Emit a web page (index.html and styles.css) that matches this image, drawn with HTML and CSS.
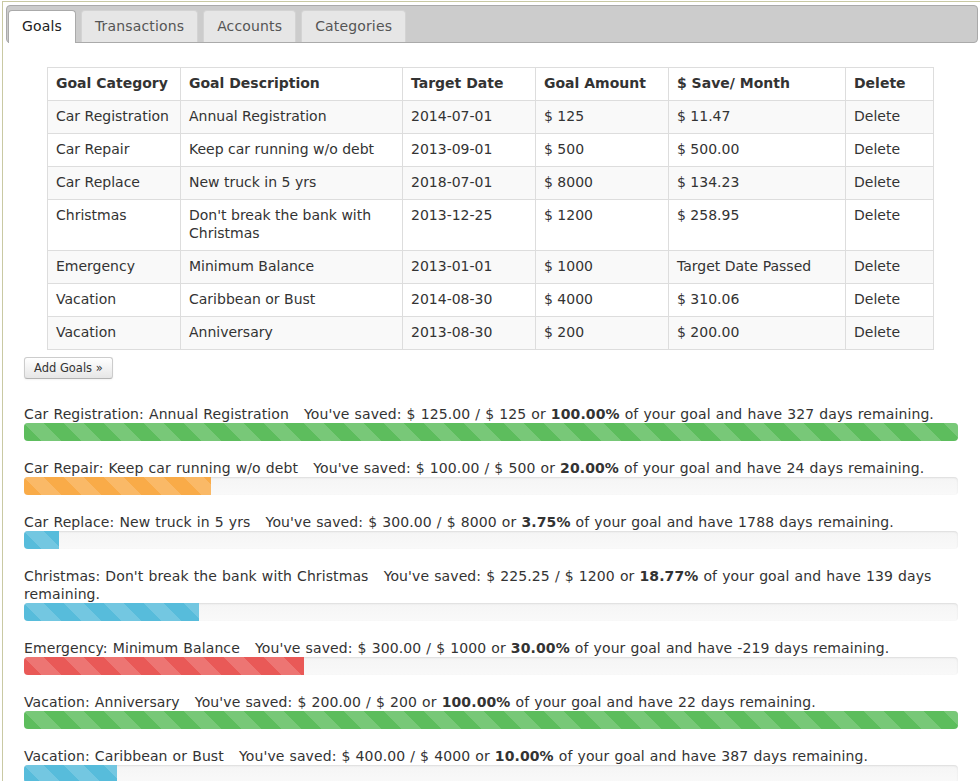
FILE: index.html
```html
<!DOCTYPE html>
<html>
<head>
<meta charset="utf-8">
<title>Goals</title>
<link rel="stylesheet" href="styles.css">
</head>
<body>
<div class="frame">
  <ul class="nav">
    <li class="tab active">Goals</li>
    <li class="tab">Transactions</li>
    <li class="tab">Accounts</li>
    <li class="tab">Categories</li>
  </ul>
  <div class="panel">
    <table class="goals">
      <colgroup>
        <col class="c1"><col class="c2"><col class="c3"><col class="c4"><col class="c5"><col class="c6">
      </colgroup>
      <thead>
        <tr><th>Goal Category</th><th>Goal Description</th><th>Target Date</th><th>Goal Amount</th><th>$ Save/ Month</th><th>Delete</th></tr>
      </thead>
      <tbody>
        <tr><td>Car Registration</td><td>Annual Registration</td><td>2014-07-01</td><td>$ 125</td><td>$ 11.47</td><td>Delete</td></tr>
        <tr><td>Car Repair</td><td>Keep car running w/o debt</td><td>2013-09-01</td><td>$ 500</td><td>$ 500.00</td><td>Delete</td></tr>
        <tr><td>Car Replace</td><td>New truck in 5 yrs</td><td>2018-07-01</td><td>$ 8000</td><td>$ 134.23</td><td>Delete</td></tr>
        <tr><td>Christmas</td><td>Don't break the bank with Christmas</td><td>2013-12-25</td><td>$ 1200</td><td>$ 258.95</td><td>Delete</td></tr>
        <tr><td>Emergency</td><td>Minimum Balance</td><td>2013-01-01</td><td>$ 1000</td><td>Target Date Passed</td><td>Delete</td></tr>
        <tr><td>Vacation</td><td>Caribbean or Bust</td><td>2014-08-30</td><td>$ 4000</td><td>$ 310.06</td><td>Delete</td></tr>
        <tr><td>Vacation</td><td>Anniversary</td><td>2013-08-30</td><td>$ 200</td><td>$ 200.00</td><td>Delete</td></tr>
      </tbody>
    </table>
    <button class="btn">Add Goals &raquo;</button>

    <div class="goal">
      <p class="label">Car Registration: Annual Registration &nbsp;&nbsp;You've saved: $ 125.00 / $ 125 or <b>100.00%</b> of your goal and have 327 days remaining.</p>
      <div class="progress"><div class="bar success" style="width:100%"></div></div>
    </div>
    <div class="goal">
      <p class="label">Car Repair: Keep car running w/o debt &nbsp;&nbsp;You've saved: $ 100.00 / $ 500 or <b>20.00%</b> of your goal and have 24 days remaining.</p>
      <div class="progress"><div class="bar warning" style="width:20%"></div></div>
    </div>
    <div class="goal">
      <p class="label">Car Replace: New truck in 5 yrs &nbsp;&nbsp;You've saved: $ 300.00 / $ 8000 or <b>3.75%</b> of your goal and have 1788 days remaining.</p>
      <div class="progress"><div class="bar info" style="width:3.75%"></div></div>
    </div>
    <div class="goal">
      <p class="label">Christmas: Don't break the bank with Christmas &nbsp;&nbsp;You've saved: $ 225.25 / $ 1200 or <b>18.77%</b> of your goal and have 139 days remaining.</p>
      <div class="progress"><div class="bar info" style="width:18.77%"></div></div>
    </div>
    <div class="goal">
      <p class="label">Emergency: Minimum Balance &nbsp;&nbsp;You've saved: $ 300.00 / $ 1000 or <b>30.00%</b> of your goal and have -219 days remaining.</p>
      <div class="progress"><div class="bar danger" style="width:30%"></div></div>
    </div>
    <div class="goal">
      <p class="label">Vacation: Anniversary &nbsp;&nbsp;You've saved: $ 200.00 / $ 200 or <b>100.00%</b> of your goal and have 22 days remaining.</p>
      <div class="progress"><div class="bar success" style="width:100%"></div></div>
    </div>
    <div class="goal">
      <p class="label">Vacation: Caribbean or Bust &nbsp;&nbsp;You've saved: $ 400.00 / $ 4000 or <b>10.00%</b> of your goal and have 387 days remaining.</p>
      <div class="progress"><div class="bar info" style="width:10%"></div></div>
    </div>
  </div>
</div>
</body>
</html>
```

FILE: styles.css
```css
html, body {
  margin: 0;
  padding: 0;
  background: #fff;
}
body {
  font-family: "DejaVu Sans", Verdana, sans-serif;
  font-size: 14px;
  line-height: 18px;
  color: #333;
}
.frame {
  margin: 1px 0 0 2px;
  border: 1px solid #c9c9a3;
  border-right: none;
  padding: 3px 2px 0 3px;
}
.nav {
  list-style: none;
  margin: 0;
  padding: 4px 0 0 1px;
  height: 32px;
  display: flex;
  gap: 5px;
  background: #cccccc;
  border: 1px solid #aaaaaa;
  border-radius: 4px;
}
.tab {
  height: 32px;
  box-sizing: border-box;
  padding: 6px 13px 0;
  letter-spacing: 0.15px;
  border: 1px solid #d3d3d3;
  border-bottom: none;
  border-radius: 4px 4px 0 0;
  background: #e6e6e6;
  color: #555;
}
.tab.active {
  height: 33px;
  background: #fff;
  border-color: #aaa;
  color: #212121;
}
.panel {
  padding: 24px 20px 0 18px;
}
.goals {
  width: 887px;
  margin: 0 0 0 23px;
  border-collapse: collapse;
  table-layout: fixed;
  border: 1px solid #ddd;
}
.c1 { width: 133px; }
.c2 { width: 222px; }
.c3 { width: 133px; }
.c4 { width: 133px; }
.c5 { width: 177px; }
.c6 { width: 88px; }
.goals th, .goals td {
  border: 1px solid #ddd;
  padding: 6px 8px 8px;
  text-align: left;
  vertical-align: top;
  line-height: 18px;
}
.goals th {
  font-weight: bold;
  color: #333;
}
.goals tbody tr:nth-child(odd) td {
  background: #f9f9f9;
}
.btn {
  display: block;
  margin: 7px 0 0 0;
  height: 22px;
  padding: 1px 9px;
  font-family: "DejaVu Sans", Verdana, sans-serif;
  font-size: 11.5px;
  line-height: 18px;
  color: #333;
  background: linear-gradient(#ffffff, #e6e6e6);
  border: 1px solid #cccccc;
  border-bottom-color: #b3b3b3;
  border-radius: 3px;
  box-shadow: inset 0 1px 0 rgba(255,255,255,.2), 0 1px 2px rgba(0,0,0,.05);
}
.goal:first-of-type {
  margin-top: 26px;
}
.goal {
  margin-bottom: 18px;
}
.label {
  margin: 0;
  line-height: 18px;
  word-spacing: 0.5px;
  letter-spacing: 0.1px;
}
.progress {
  height: 18px;
  border-radius: 4px;
  overflow: hidden;
  background: linear-gradient(#f5f5f5, #f9f9f9);
  box-shadow: inset 0 1px 2px rgba(0,0,0,.1);
}
.bar {
  height: 100%;
  background-size: 40px 40px;
  background-image: linear-gradient(45deg, rgba(255,255,255,.17) 25%, transparent 25%, transparent 50%, rgba(255,255,255,.17) 50%, rgba(255,255,255,.17) 75%, transparent 75%, transparent);
}
.bar.success {
  background-color: #5dbd5d;
}
.bar.warning {
  background-color: #f9ab48;
}
.bar.info {
  background-color: #57bcdb;
}
.bar.danger {
  background-color: #e95957;
}
```
